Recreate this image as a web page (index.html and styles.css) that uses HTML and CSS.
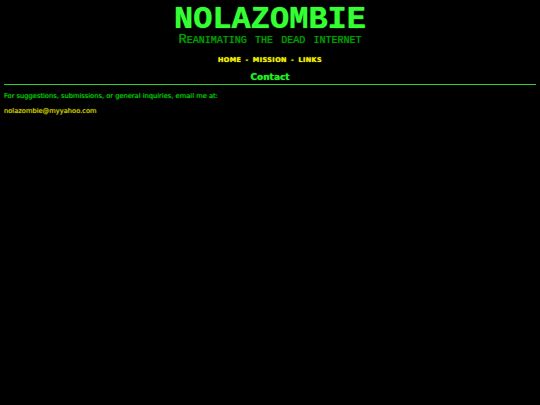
FILE: index.html
```html
<!DOCTYPE html>
<html>
<head>
<meta charset="utf-8">
<link rel="stylesheet" href="styles.css">
</head>
<body>
<header class="masthead">
  <h1 class="title">NOLAZOMBIE</h1>
  <div class="tagline">Reanimating the dead internet</div>
</header>
<nav class="nav">
  <a href="#">HOME</a> - <a href="#">MISSION</a> - <a href="#">LINKS</a>
</nav>
<h2 class="section-title">Contact</h2>
<hr class="rule">
<p class="text">For suggestions, submissions, or general inquiries, email me at:</p>
<p class="email">nolazombie@myyahoo.com</p>
</body>
</html>
```
FILE: styles.css
```css
html, body {
  background: #000;
}
body {
  margin: 4px;
  font-family: "DejaVu Sans", Verdana, sans-serif;
  color: #00cc00;
}
.masthead {
  text-align: center;
  padding-top: 2px;
}
.title {
  margin: 0;
  font-family: "Liberation Mono", "Courier New", monospace;
  font-weight: bold;
  font-size: 32px;
  line-height: 28px;
  color: #33ff33;
  text-shadow: 0 0 1px #33ff33;
}
.tagline {
  font-family: "Liberation Mono", "Courier New", monospace;
  font-variant: small-caps;
  text-transform: lowercase;
  font-size: 13.7px;
  line-height: 12px;
  color: #00a000;
  text-shadow: 0 0 1px #00a000;
}
.tagline::first-letter {
  text-transform: uppercase;
}
.nav {
  text-align: center;
  margin-top: 10px;
  font-size: 6.5px;
  font-weight: bold;
  letter-spacing: 0.4px;
  word-spacing: 1.5px;
  color: #eeee00;
  text-shadow: 0 0 1px #eeee00;
}
.nav a {
  color: #eeee00;
  text-decoration: none;
}
.section-title {
  margin: 8px 0 0;
  text-align: center;
  font-size: 9px;
  font-weight: bold;
  color: #22ee22;
  text-shadow: 0 0 1px #22ee22;
}
.rule {
  margin: 2px 0 0;
  border: 0;
  height: 1px;
  background: #33cc33;
}
.text {
  margin: 7px 0 0;
  font-size: 6.7px;
  color: #00c800;
  text-shadow: 0 0 1px #00c800;
}
.email {
  margin: 7px 0 0;
  font-size: 6.7px;
  color: #cccc00;
  text-shadow: 0 0 1px #cccc00;
}
```
